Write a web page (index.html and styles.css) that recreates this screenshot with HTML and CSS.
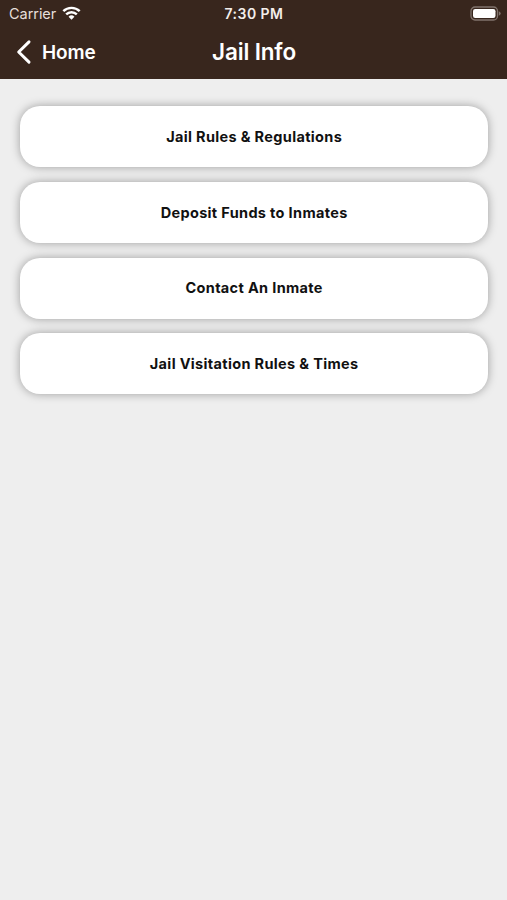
FILE: index.html
```html
<!DOCTYPE html>
<html lang="en">
<head>
<meta charset="utf-8">
<title>Jail Info</title>
<link rel="stylesheet" href="styles.css">
</head>
<body>
<header class="header">
  <div class="status">
    <div class="status-left">
      <span class="carrier">Carrier</span>
      <svg class="wifi" width="19" height="14" viewBox="0 0 20 14" fill="none" stroke="currentColor" stroke-width="2.6">
        <path d="M1.4 5.1A12.3 12.3 0 0 1 18.6 5.1M4.4 8.4A8 8 0 0 1 15.6 8.4"/>
        <path d="M10 14L6.9 10.9A4.4 4.4 0 0 1 13.1 10.9Z" fill="currentColor" stroke="none"/>
      </svg>
    </div>
    <span class="time">7:30 PM</span>
    <svg class="battery" width="31" height="15" viewBox="0 0 31 15">
      <rect x="1" y="1" width="26.5" height="13" rx="4" fill="none" stroke="#80736c" stroke-width="1.3"/>
      <rect x="3" y="3" width="22.5" height="9" rx="2.2" fill="#fff"/>
      <path d="M28.8 5.2Q30.7 6 30.7 7.5T28.8 9.8Z" fill="#80736c"/>
    </svg>
  </div>
  <nav class="nav">
    <a class="back">
      <svg class="chevron" width="16" height="26" viewBox="0 0 16 26" fill="none" stroke="currentColor" stroke-width="3" stroke-linecap="round" stroke-linejoin="round">
        <path d="M13 2.9L2.7 13L13 23.1"/>
      </svg>
      <span class="back-label">Home</span>
    </a>
    <h1 class="title">Jail Info</h1>
  </nav>
</header>
<main class="list">
  <button class="card"><span class="label">Jail Rules &amp; Regulations</span></button>
  <button class="card"><span class="label">Deposit Funds to Inmates</span></button>
  <button class="card"><span class="label">Contact An Inmate</span></button>
  <button class="card"><span class="label">Jail Visitation Rules &amp; Times</span></button>
</main>
</body>
</html>
```
FILE: styles.css
```css
* { box-sizing: border-box; }
body {
  margin: 0;
  min-height: 900px;
  background: #eeeeee;
  color: #111;
  font-family: Inter, "Liberation Sans", sans-serif;
}
.header {
  height: 79px;
  background: #38261d;
  color: #fff;
}
.status {
  display: grid;
  grid-template-columns: 1fr auto 1fr;
  align-items: center;
  height: 27px;
  padding: 0 6px 0 9px;
}
.status-left { display: flex; align-items: center; gap: 5.5px; }
.carrier { font-size: 14.5px; color: #e6dfda; letter-spacing: -0.05px; }
.wifi { display: block; margin-top: -1px; }
.time { font-size: 14px; font-weight: 600; letter-spacing: 0.45px; color: #f3eeeb; margin-left: -2px; }
.battery { justify-self: end; }
.nav {
  display: grid;
  grid-template-columns: 1fr auto 1fr;
  align-items: center;
  height: 50px;
  padding: 0 16px;
}
.back { display: flex; align-items: center; gap: 10px; }
.chevron { display: block; }
.back-label { font-size: 19px; line-height: 24px; font-weight: 600; letter-spacing: -0.1px; padding-top: 2px; }
.title { margin: 0; font-size: 22.5px; line-height: 28px; font-weight: 600; letter-spacing: -0.15px; padding-left: 1px; }
.list {
  display: flex;
  flex-direction: column;
  gap: 14.8px;
  padding: 27px 19.5px 0 20.3px;
}
.card {
  display: flex;
  align-items: center;
  justify-content: center;
  height: 61px;
  padding: 0;
  border: 0;
  border-radius: 20px;
  background: #fff;
  color: #111;
  font-family: inherit;
  box-shadow: 0 0 10px rgba(0, 0, 0, 0.34);
}
.label { font-size: 14.5px; line-height: 20px; font-weight: 700; letter-spacing: 0.34px; padding: 0.8px 0 0 0.5px; }
```
